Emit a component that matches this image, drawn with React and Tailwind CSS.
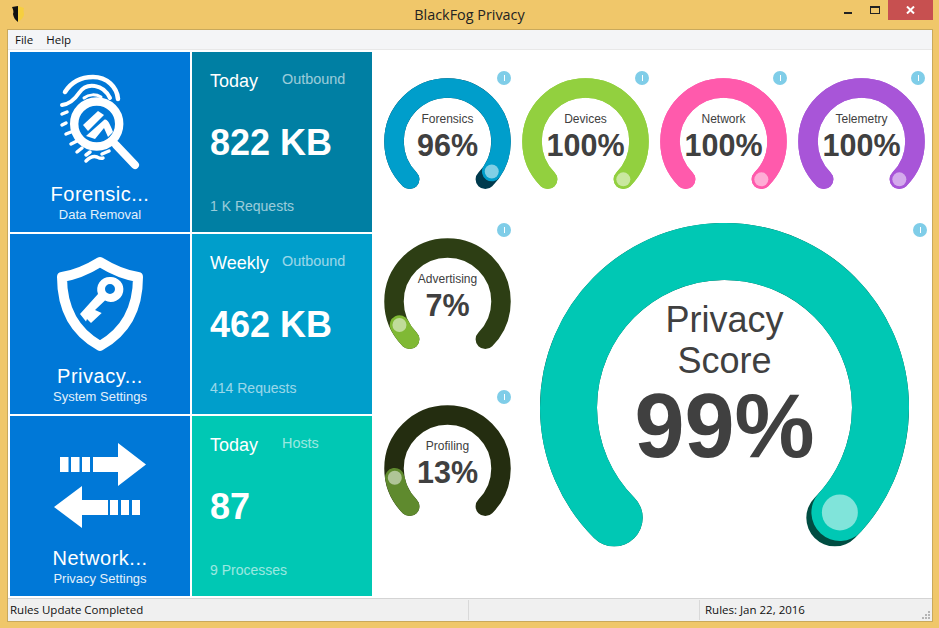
import React from 'react';

const arial = 'font-["Liberation_Sans",Arial,sans-serif]';

const polar = (c, r, deg) => {
  const a = ((deg - 90) * Math.PI) / 180;
  return [c + r * Math.cos(a), c + r * Math.sin(a)];
};

const arc = (c, r, from, to) => {
  const [x1, y1] = polar(c, r, from);
  const [x2, y2] = polar(c, r, to);
  const large = to - from > 180 ? 1 : 0;
  return `M${x1} ${y1}A${r} ${r} 0 ${large} 1 ${x2} ${y2}`;
};

const Info = ({ className }) => (
  <div className={`absolute w-[14px] h-[14px] rounded-full bg-[#7fcde8] flex items-center justify-center ${className}`}>
    <div className="w-px h-[6px] bg-white"></div>
  </div>
);

const Ring = ({ size, r, width, dot, value, track, fill }) => {
  const c = size / 2;
  const end = -135 + 270 * value / 100;
  const [dx, dy] = polar(c, r, end);
  return (
    <svg width={size} height={size} viewBox={`0 0 ${size} ${size}`} className="block">
      <path d={arc(c, r, -135, 135)} fill="none" stroke={track} strokeWidth={width} strokeLinecap="round" />
      <path d={arc(c, r, -135, end)} fill="none" stroke={fill} strokeWidth={width} strokeLinecap="round" />
      <circle cx={dx} cy={dy} r={dot} fill="#fff" fillOpacity="0.5" />
    </svg>
  );
};

const Gauge = ({ label, value, track, fill, infoClass = 'left-[113px] top-[-7px]' }) => (
  <div className={`relative w-[128px] h-[128px] ${arial}`}>
    <Ring size={127} r={53.5} width={19.5} dot={7} value={value} track={track} fill={fill} />
    <Info className={infoClass} />
    <div className="absolute inset-0 flex flex-col items-center pt-[34px] pr-px text-[#404040]">
      <div className="text-[12px] leading-[14px]">{label}</div>
      <div className="text-[30.500px] leading-[30px] font-bold mt-[4px]">{value}%</div>
    </div>
  </div>
);

const ForensicIcon = () => (
  <svg width="180" height="130" viewBox="0 0 180 130" className="block" fill="none" stroke="#fff" strokeLinecap="round">
    <path d="M55 40C62 29 72 25 83 25C97 25 107 35 108 47" strokeWidth="4.500" />
    <path d="M52 53C60 52 65 47 69 41C73 35 79 33 85 34C92 35 97 40 100 46" strokeWidth="4" />
    <path d="M74 46C79 42 86 42 91 45" strokeWidth="3" />
    <path d="M52 62L57 60M52 73L56 71M56 82L61 80M61 92L67 89M67 100L72 96M76 103L80 100M92 102L99 99" strokeWidth="3.500" />
    <path d="M76 109C80 105 84 104 87 105C89 106 91 107 93 106" strokeWidth="3.500" />
    <circle cx="86.700" cy="72" r="22.500" strokeWidth="8.400" />
    <path d="M106 93L125 113" strokeWidth="8" />
    <path d="M73 73L88 59L94 63L78 79Z" fill="#fff" stroke="none" />
    <path d="M76 84L94 68C97 66 100 72 103 80L98 85L94 76L85 87Z" fill="#fff" stroke="none" />
  </svg>
);

const ShieldIcon = () => (
  <svg width="180" height="130" viewBox="0 0 180 130" className="block">
    <path d="M90 28C77 36 65 41 52 43C52 72 63 97 90 112C117 97 128 72 128 43C115 41 103 36 90 28Z" fill="none" stroke="#fff" strokeWidth="10" strokeLinejoin="round" />
    <path fillRule="evenodd" fill="#fff" d="M100 43A12.500 12.500 0 1 1 95 66.500L85 76L91.700 79L81 89L77 85L76 87.500L70 80L88 60A12.500 12.500 0 0 1 100 43ZM100 50A5 5 0 1 0 100 60A5 5 0 0 0 100 50Z" />
  </svg>
);

const ArrowsIcon = () => (
  <svg width="180" height="130" viewBox="0 0 180 130" className="block" fill="#fff">
    <path d="M50 41h8.500v15H50zM61 41h8.500v15H61zM72 41h8v15h-8zM83 41h25V27l28 21.500L108 70V56H83z" />
    <path d="M122 84h8v15h-8zM111 84h8v15h-8zM100 84h8v15h-8zM98 84H72V70L44 91l28 21V99h26z" />
  </svg>
);

const Tile = ({ icon, title, sub }) => (
  <div className={`w-[180px] h-[180px] bg-[#0078d7] text-white flex flex-col items-center ${arial}`}>
    {icon}
    <div className="text-[20px] leading-[24px] tracking-[0.5px]">{title}</div>
    <div className="text-[13px] leading-[16px] mt-[1px] text-[#e3f0fb]">{sub}</div>
  </div>
);

const Stat = ({ period, kind, value, foot, bg }) => (
  <div className={`w-[180px] h-[180px] text-white pl-[18px] flex flex-col ${bg} ${arial}`}>
    <div className="flex items-start pt-[18px] h-[41px]">
      <div className="text-[18px] leading-[23px] w-[72px]">{period}</div>
      <div className="text-[14.400px] leading-[18px] opacity-60">{kind}</div>
    </div>
    <div className="text-[36px] leading-[40px] font-bold mt-[30px]">{value}</div>
    <div className="text-[14px] leading-[16px] opacity-60 mt-[35px]">{foot}</div>
  </div>
);

export default function App() {
  return (
    <div className="w-[939px] h-[628px] bg-[#f0c76a] flex flex-col overflow-hidden font-['Open_Sans',sans-serif]">
      <div className="relative h-[29px] shrink-0 flex items-center justify-center">
        <svg width="12" height="16" viewBox="0 0 12 16" className="absolute left-[12px] top-[6px]">
          <path d="M0 1L6 0V16C3 14 1.500 11 1 8C2 6 1 3 0 1Z" fill="#111" />
          <path d="M6 0L12 2C11 5 12 7 12 9C11 12 9 14 6 16Z" fill="#f6cf3f" />
        </svg>
        <div className="text-[14.400px] leading-[18px] text-[#222]">BlackFog Privacy</div>
        <div className="absolute left-[844px] top-[12px] w-[8px] h-[2px] bg-[#222]"></div>
        <div className="absolute left-[870px] top-[6px] w-[10px] h-[8px] border border-[#222] border-t-2"></div>
        <div className="absolute left-[888px] top-0 w-[45px] h-[20px] bg-[#c75050] flex items-center justify-center">
          <svg width="9" height="8" viewBox="0 0 9 8"><path d="M1 0.500L8 7.500M8 0.500L1 7.500" stroke="#fff" strokeWidth="2" /></svg>
        </div>
      </div>

      <div className="ml-[7px] mr-[6px] w-[926px] h-[593px] border border-[#c9a95c] bg-white flex flex-col">
        <div className="h-[20px] bg-[#f4f5f7] border-b border-[#e8e8e8] flex items-center gap-[13px] pl-[7px] text-[11.500px] text-[#111]">
          <span>File</span>
          <span>Help</span>
        </div>
        <div className="flex-1 min-h-0 flex pl-[2px] pt-[2px]">
          <div className="flex gap-[2px] w-[362px] shrink-0">
            <div className="flex flex-col gap-[2px]">
              <Tile icon={<ForensicIcon />} title="Forensic..." sub="Data Removal" />
              <Tile icon={<ShieldIcon />} title="Privacy..." sub="System Settings" />
              <Tile icon={<ArrowsIcon />} title="Network..." sub="Privacy Settings" />
            </div>
            <div className="flex flex-col gap-[2px]">
              <Stat period="Today" kind="Outbound" value="822 KB" foot="1 K Requests" bg="bg-[#007fa3]" />
              <Stat period="Weekly" kind="Outbound" value="462 KB" foot="414 Requests" bg="bg-[#009ecb]" />
              <Stat period="Today" kind="Hosts" value="87" foot="9 Processes" bg="bg-[#00c8b4]" />
            </div>
          </div>
          <div className="pl-[12px] pt-[26px] flex flex-col">
            <div className="flex gap-[10px]">
              <Gauge label="Forensics" value={96} track="#003a4d" fill="#009ecb" />
              <Gauge label="Devices" value={100} track="#92d03f" fill="#92d03f" />
              <Gauge label="Network" value={100} track="#ff5aac" fill="#ff5aac" />
              <Gauge label="Telemetry" value={100} track="#a855d8" fill="#a855d8" />
            </div>
            <div className="flex mt-[17px]">
              <div className="flex flex-col gap-[39px] pt-[15px]">
                <Gauge label="Advertising" value={7} track="#2d3e14" fill="#80b935" infoClass="left-[113px] top-[-15px]" />
                <Gauge label="Profiling" value={13} track="#242d10" fill="#5f8a2e" infoClass="left-[113px] top-[-15px]" />
              </div>
              <div className={`relative w-[369px] h-[369px] ml-[28px] ${arial}`}>
                <Ring size={369} r={156} width={57} dot={18} value={99} track="#004d42" fill="#00c8b4" />
                <Info className="left-[373px] top-0" />
                <div className="absolute inset-0 flex flex-col items-center pt-[76px] text-[#404040]">
                  <div className="text-[36px] leading-[41px]">Privacy</div>
                  <div className="text-[36px] leading-[41px]">Score</div>
                  <div className="text-[90px] leading-[90px] font-bold">99%</div>
                </div>
              </div>
            </div>
          </div>
        </div>
        <div className="relative h-[23px] shrink-0 bg-[#f0f0f0] border-t border-[#d4d4d4] flex items-center text-[11.500px] text-[#111]">
          <div className="w-[461px] pl-[2px] h-[20px] leading-[20px] border-r border-[#d9d9d9]">Rules Update Completed</div>
          <div className="w-[231px] h-[20px] border-r border-[#d9d9d9]"></div>
          <div className="pl-[5px] leading-[20px]">Rules: Jan 22, 2016</div>
          <svg width="10" height="10" viewBox="0 0 10 10" className="absolute right-[1px] bottom-[1px]" fill="#b5b5b5">
            <rect x="7" y="1" width="2" height="2" />
            <rect x="4" y="4" width="2" height="2" />
            <rect x="7" y="4" width="2" height="2" />
            <rect x="1" y="7" width="2" height="2" />
            <rect x="4" y="7" width="2" height="2" />
            <rect x="7" y="7" width="2" height="2" />
          </svg>
        </div>
      </div>
    </div>
  );
}
